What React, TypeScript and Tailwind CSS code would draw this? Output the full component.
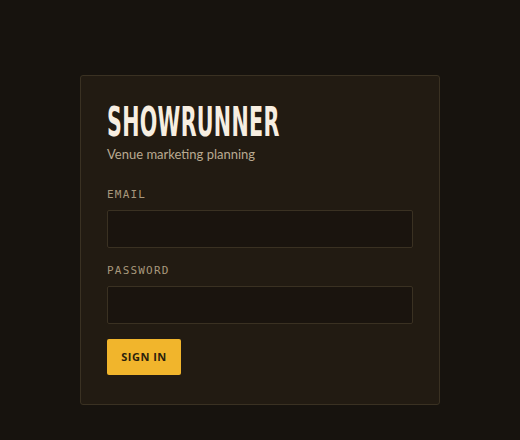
export default function App() {
  return (
    <div className="min-h-[440px] w-full bg-[#17130e] flex justify-center pt-[75px] font-['Lato',sans-serif]">
      <div className="w-[360px] h-[330px] rounded-[3px] border border-[#3a3122] bg-[#221b12] p-[26px]">
        <h1 className="origin-left scale-x-[0.56] whitespace-nowrap font-['DejaVu_Sans_Condensed','DejaVu_Sans',sans-serif] text-[41px] font-bold leading-[40px] tracking-[0.5px] text-[#f7eee1]">
          SHOWRUNNER
        </h1>
        <p className="mt-[2px] text-[13px] leading-[20px] text-[#b9aa91]">Venue marketing planning</p>

        <form className="mt-[24px] flex flex-col" onSubmit={(e) => e.preventDefault()}>
          <label className="font-['DejaVu_Sans_Mono',monospace] text-[11px] leading-[14px] tracking-[1.2px] text-[#a8987c]">
            EMAIL
          </label>
          <input
            type="email"
            className="mt-[8px] h-[38px] w-full rounded-[2px] border border-[#3a3122] bg-[#1a140e] px-3 text-[14px] text-[#f7eee1] outline-none"
          />
          <label className="mt-[16px] font-['DejaVu_Sans_Mono',monospace] text-[11px] leading-[14px] tracking-[1.2px] text-[#a8987c]">
            PASSWORD
          </label>
          <input
            type="password"
            className="mt-[8px] h-[38px] w-full rounded-[2px] border border-[#3a3122] bg-[#1a140e] px-3 text-[14px] text-[#f7eee1] outline-none"
          />
          <div className="mt-[15px]">
            <button
              type="submit"
              className="h-[36px] w-[74px] rounded-[2px] bg-[#f1b52c] font-['Open_Sans',sans-serif] text-[11px] font-bold tracking-[0.5px] text-[#2b1f0c]"
            >
              SIGN IN
            </button>
          </div>
        </form>
      </div>
    </div>
  );
}
